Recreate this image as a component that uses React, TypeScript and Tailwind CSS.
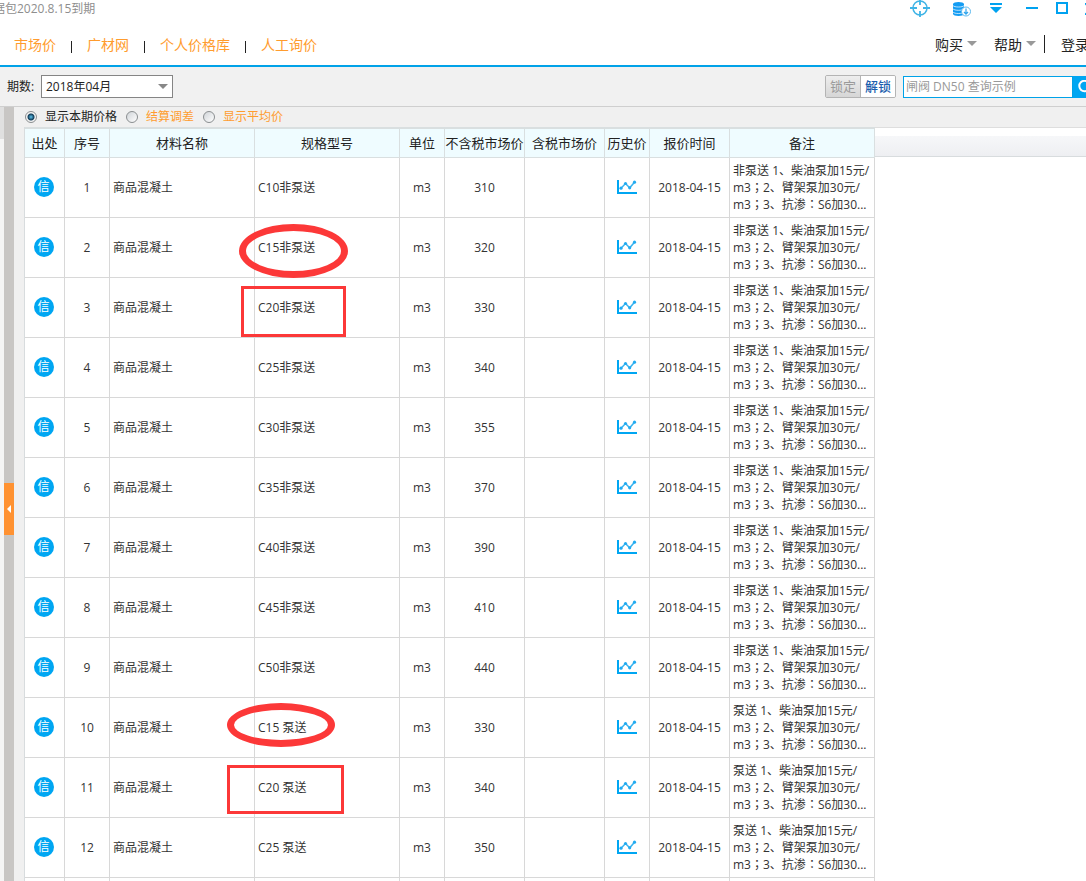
import React, { useState } from "react";

type Mark = "ellipse" | "box" | "flatEllipse" | "wideBox";

interface PriceRow {
  no: number;
  spec: string;
  price: number;
  pumped?: boolean;
  mark?: Mark;
}

const rows: PriceRow[] = [
  { no: 1, spec: "C10非泵送", price: 310 },
  { no: 2, spec: "C15非泵送", price: 320, mark: "ellipse" },
  { no: 3, spec: "C20非泵送", price: 330, mark: "box" },
  { no: 4, spec: "C25非泵送", price: 340 },
  { no: 5, spec: "C30非泵送", price: 355 },
  { no: 6, spec: "C35非泵送", price: 370 },
  { no: 7, spec: "C40非泵送", price: 390 },
  { no: 8, spec: "C45非泵送", price: 410 },
  { no: 9, spec: "C50非泵送", price: 440 },
  { no: 10, spec: "C15 泵送", price: 330, pumped: true, mark: "flatEllipse" },
  { no: 11, spec: "C20 泵送", price: 340, pumped: true, mark: "wideBox" },
  { no: 12, spec: "C25 泵送", price: 350, pumped: true },
];

const columns = [
  { title: "出处", width: "w-[40px]" },
  { title: "序号", width: "w-[45px]" },
  { title: "材料名称", width: "w-[145px]" },
  { title: "规格型号", width: "w-[145px]" },
  { title: "单位", width: "w-[45px]" },
  { title: "不含税市场价", width: "w-[80px]" },
  { title: "含税市场价", width: "w-[80px]" },
  { title: "历史价", width: "w-[45px]" },
  { title: "报价时间", width: "w-[80px]" },
  { title: "备注", width: "w-[145px]" },
];

const markStyles: Record<Mark, string> = {
  ellipse: "-left-4 top-1.5 h-[54px] w-[109px] rounded-[50%] border-[7px]",
  box: "-left-3.5 top-2 h-[51px] w-[105px] border-[3px]",
  flatEllipse: "-left-7 top-[5px] h-[44px] w-[108px] rounded-[50%] border-[7px]",
  wideBox: "-left-7 top-[7px] h-[49px] w-[117px] border-[3px]",
};

const cell = "h-[60px] border-r border-b border-[#d8d8d8] p-0";

function Caret({ className }: { className: string }) {
  return (
    <svg className={className} width="10" height="5" viewBox="0 0 10 5" aria-hidden="true">
      <path d="M0 0h10L5 5z" fill="currentColor" />
    </svg>
  );
}

function TargetIcon() {
  return (
    <svg width="20" height="20" viewBox="0 0 20 20" fill="none" stroke="#3fb4e6" aria-hidden="true">
      <circle cx="10" cy="9" r="7" strokeWidth="1.5" />
      <path d="M10 0v6M10 12v6M0 9h7M13 9h7" strokeWidth="1.8" />
    </svg>
  );
}

function DatabaseIcon() {
  return (
    <svg width="18" height="16" viewBox="0 0 18 16" fill="none" aria-hidden="true">
      <path d="M0 3C0 .3 11 .3 11 3v10c0 2.500-11 2.500-11 0z" fill="#139cf3" />
      <path d="M0 4.500c1 2 10 2 11 0M0 7.800c1 2 10 2 11 0M0 11c1 2 10 2 11 0" stroke="#fff" strokeWidth=".7" />
      <circle cx="13" cy="10.500" r="4.500" fill="#fff" stroke="#5db9ee" />
      <path d="M13 7.500v5.500M11 11l2 2.200 2-2.200" stroke="#2ea4ec" strokeWidth="1.200" />
    </svg>
  );
}

function TrendIcon() {
  return (
    <svg width="20" height="14" viewBox="0 0 20 14" fill="none" aria-hidden="true">
      <path d="M1 0v13h19" stroke="#00a6f2" strokeWidth="2" />
      <path d="M4 8.200 8.500 3.500 12.700 7.800 17.500 2.200" stroke="#39b4f0" strokeWidth="1.500" />
      <g fill="#21aaf0">
        <circle cx="4" cy="8.200" r="1.600" />
        <circle cx="8.500" cy="3.500" r="1.600" />
        <circle cx="12.700" cy="7.800" r="1.600" />
        <circle cx="17.500" cy="2.200" r="1.600" />
      </g>
    </svg>
  );
}

function TitleBar() {
  return (
    <div className="flex h-[18px] items-center justify-between text-xs text-[#8e8e8e]">
      <span className="-ml-[7px] whitespace-nowrap">据包2020.8.15到期</span>
      <div className="-mr-[11px] flex shrink-0 items-center">
        <button aria-label="定位"><TargetIcon /></button>
        <button aria-label="下载数据" className="ml-[23px]"><DatabaseIcon /></button>
        <button aria-label="菜单" className="ml-[19px]">
          <svg width="12" height="12" viewBox="0 0 12 12" fill="#00a2f0" aria-hidden="true">
            <path d="M0 0h12v2H0zM0 4h12L6 10z" />
          </svg>
        </button>
        <button aria-label="最小化" className="ml-6">
          <svg width="12" height="12" viewBox="0 0 12 12" aria-hidden="true"><path d="M0 4h12v2H0z" fill="#00a2f0" /></svg>
        </button>
        <button aria-label="最大化" className="ml-[18px] pb-0.5">
          <svg width="12" height="12" viewBox="0 0 12 12" fill="none" stroke="#00a2f0" strokeWidth="2" aria-hidden="true">
            <path d="M1 1h10v10H1z" />
          </svg>
        </button>
        <button aria-label="关闭" className="ml-[17px]">
          <svg width="12" height="12" viewBox="0 0 12 12" stroke="#00a2f0" strokeWidth="2" aria-hidden="true">
            <path d="M0 0 12 12M12 0 0 12" />
          </svg>
        </button>
      </div>
    </div>
  );
}

function NavBar() {
  const links = ["市场价", "广材网", "个人价格库", "人工询价"];
  return (
    <div className="flex h-[49px] items-center justify-between border-b-2 border-[#00a2e8] pt-[7px] pl-3.5 text-sm">
      <nav className="flex shrink-0 items-center gap-[15px]">
        {links.map((link, i) => (
          <React.Fragment key={link}>
            {i > 0 && <span className="mt-1 h-3 w-px bg-[#222]" />}
            <a href="#" className="text-[#ff9c2e]">{link}</a>
          </React.Fragment>
        ))}
      </nav>
      <div className="-mr-[3px] flex shrink-0 items-center text-[#222]">
        <button className="flex items-center gap-1">购买<Caret className="mb-1 text-[#999]" /></button>
        <button className="ml-[17px] flex items-center gap-1">帮助<Caret className="mb-1 text-[#999]" /></button>
        <span className="mb-0.5 ml-2 h-[18px] w-px bg-[#222]" />
        <a href="#" className="ml-4">登录</a>
      </div>
    </div>
  );
}

function Toolbar() {
  return (
    <div className="flex h-10 items-center border-b border-[#cfcfcf] bg-[#f1f1f1] pl-[7px] text-xs">
      <label htmlFor="period" className="w-[34px] shrink-0 text-[#222]">期数:</label>
      <div className="relative shrink-0">
        <select
          id="period"
          className="block h-[23px] w-[132px] appearance-none border border-[#858585] bg-white pl-1 text-[#222]"
        >
          <option>2018年04月</option>
        </select>
        <Caret className="pointer-events-none absolute top-[9px] right-[5px] text-[#888]" />
      </div>
      <div className="ml-auto flex h-[23px] w-[71px] shrink-0 overflow-hidden rounded-xs border border-[#b4b4b4] text-[13px]">
        <button disabled className="flex-1 border-r border-[#b4b4b4] bg-linear-to-b from-[#eeeeee] to-[#d6d6d6] text-[#9a9a9a]">
          锁定
        </button>
        <button className="flex-1 bg-white font-medium text-[#1e5fae]">解锁</button>
      </div>
      <div className="-mr-[11px] ml-[7px] flex h-[22px] shrink-0">
        <input
          type="text"
          aria-label="查询"
          placeholder="闸阀 DN50 查询示例"
          className="h-full w-[170px] border border-[#00a2e8] bg-white px-0.5 outline-none placeholder:text-[#999]"
        />
        <button aria-label="搜索" className="flex w-6 items-center justify-center bg-[#00a6f2]">
          <svg width="14" height="14" viewBox="0 0 14 14" fill="none" stroke="#fff" strokeWidth="2" aria-hidden="true">
            <circle cx="6.500" cy="6" r="5.200" />
            <path d="m10 9.500 3.500 4" />
          </svg>
        </button>
      </div>
    </div>
  );
}

function PriceModes() {
  const modes = ["显示本期价格", "结算调差", "显示平均价"];
  const [mode, setMode] = useState(modes[0]);
  return (
    <div className="flex h-5 items-center gap-[9px] pl-px text-xs">
      {modes.map((name, i) => (
        <label key={name} className={i === 0 ? "flex items-center gap-2 text-[#222]" : "flex items-center gap-2 text-[#ff9c2e]"}>
          <input
            type="radio"
            name="mode"
            checked={mode === name}
            onChange={() => setMode(name)}
            className="size-3 appearance-none rounded-full border border-[#8a8e90] bg-linear-to-br from-[#d0d4d8] to-white checked:bg-[radial-gradient(circle,#5cc4ee_0,#123c58_3px,#f4f4f4_4px)]"
          />
          {name}
        </label>
      ))}
    </div>
  );
}

/* Full-width marks set in the middle of their em box. */
function Punct({ children }: { children: string }) {
  return (
    <span lang="zh-TW" className="font-['Noto_Sans_CJK_TC',sans-serif] leading-none">{children}</span>
  );
}

function PriceTable() {
  return (
    <table className="shrink-0 table-fixed border-separate border-spacing-0 border-l border-[#d8dcde] text-xs text-[#333]">
      <thead>
        <tr>
          {columns.map((c) => (
            <th
              key={c.title}
              className={`${c.width} h-[31px] border-t-2 border-r border-b border-[#d9dfe0] bg-[#effcff] p-0 text-[13px] leading-5 font-normal whitespace-nowrap text-[#222]`}
            >
              <span className="flex justify-center">{c.title}</span>
            </th>
          ))}
        </tr>
      </thead>
      <tbody>
        {rows.map((row) => (
          <tr key={row.no}>
            <td className={`${cell} pr-0.5 pb-0.5`}>
              <span className="mx-auto flex size-5 items-center justify-center rounded-full bg-[#00a6f2] text-xs leading-none text-white">
                信
              </span>
            </td>
            <td className={`${cell} text-center`}>{row.no}</td>
            <td className={`${cell} pl-[3px]`}>商品混凝土</td>
            <td className={`${cell} relative pl-[3px]`}>
              {row.spec}
              {row.mark && (
                <span className={`pointer-events-none absolute z-10 border-[#fc3838] ${markStyles[row.mark]}`} />
              )}
            </td>
            <td className={`${cell} text-center`}>m3</td>
            <td className={`${cell} text-center`}>{row.price}</td>
            <td className={cell} />
            <td className={`${cell} pb-0.5`}>
              <button aria-label="历史价" className="mx-auto block"><TrendIcon /></button>
            </td>
            <td className={`${cell} text-center whitespace-nowrap`}>2018-04-15</td>
            <td className={`${cell} pl-[3px] leading-[17px] whitespace-nowrap`}>
              {row.pumped ? "泵送" : "非泵送"} 1、柴油泵加15元/
              <br />
              m3<Punct>；</Punct>2、臂架泵加30元/
              <br />
              m3<Punct>；</Punct>3、抗渗<Punct>：</Punct>S6加30...
            </td>
          </tr>
        ))}
        <tr>
          {columns.map((c) => (
            <td key={c.title} className={cell} />
          ))}
        </tr>
      </tbody>
    </table>
  );
}

export default function App() {
  return (
    <div className="flex h-screen flex-col overflow-hidden bg-white font-['Open_Sans','Noto_Sans_CJK_SC',sans-serif]">
      <header className="shrink-0">
        <TitleBar />
        <NavBar />
        <Toolbar />
      </header>
      <main className="flex min-h-0 flex-1 bg-[#f0f0f0]">
        <div className="w-1 shrink-0 bg-[#f5f5f5]">
          <div className="h-8 bg-[#e0e0e0]" />
        </div>
        <div className="flex w-2.5 shrink-0 flex-col justify-center bg-[#c8c6c4] pt-[29px]">
          <button aria-label="展开侧栏" className="flex h-[52px] items-center justify-center bg-[#ff9232]">
            <svg width="4" height="8" viewBox="0 0 4 8" aria-hidden="true"><path d="M4 0v8L0 4z" fill="#fff" /></svg>
          </button>
        </div>
        <div className="min-w-0 flex-1 pl-2.5">
          <PriceModes />
          <div className="flex bg-white">
            <PriceTable />
            <div className="min-w-0 flex-1 border-t border-[#dedede]">
              <div className="mt-2 h-[21px] border-b border-[#d8dcde] bg-linear-to-b from-[#f6f7f9] to-[#eeeff2]" />
            </div>
          </div>
        </div>
      </main>
    </div>
  );
}
